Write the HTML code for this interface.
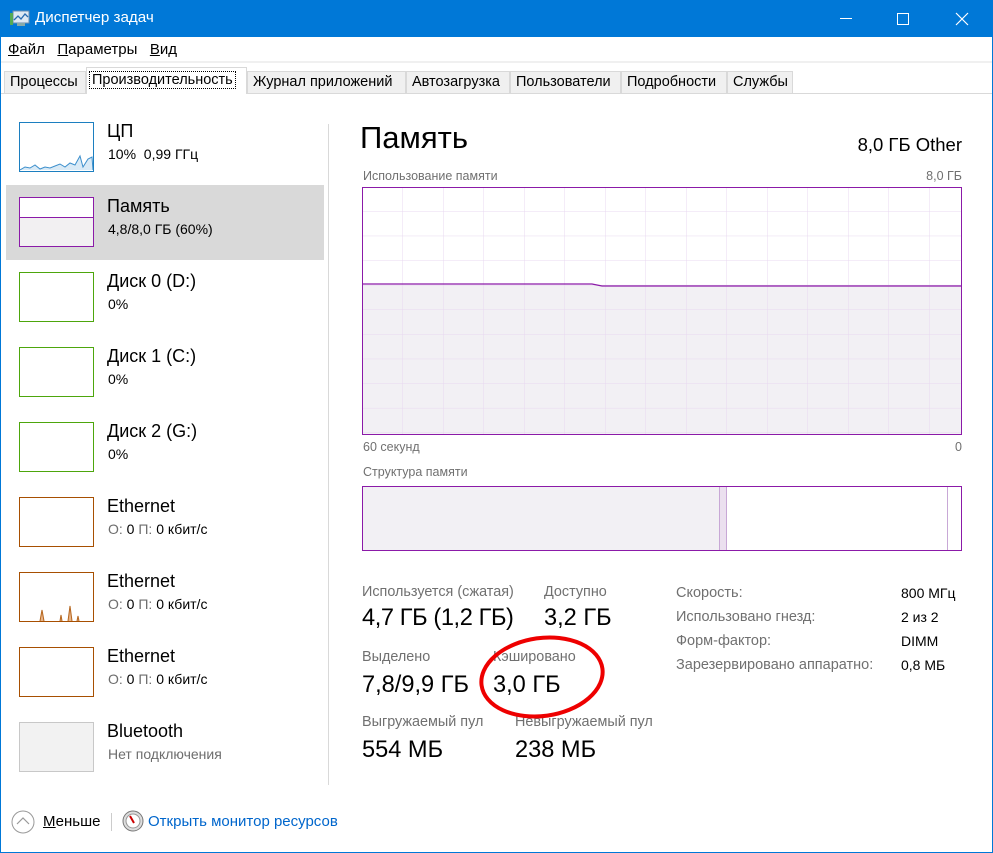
<!DOCTYPE html>
<html><head><meta charset="utf-8"><style>
*{margin:0;padding:0;box-sizing:border-box}
body{width:993px;height:853px;position:relative;background:#fff;font-family:"Segoe UI","Liberation Sans","DejaVu Sans",sans-serif;color:#000;overflow:hidden}
.a{position:absolute;white-space:nowrap}
.tab{position:absolute;top:71px;height:23px;background:#f0f0f0;border:1px solid #d9d9d9;font-size:14.5px;line-height:20px;padding-left:5px}
.th{position:absolute;left:19px;width:75px;height:50px;background:#fff}
.t1{position:absolute;left:107px;font-size:18px}
.t2{position:absolute;left:108px;font-size:14px}
.g{color:#6d6d6d}
.lbl{position:absolute;font-size:14.4px;color:#707070}
.val{position:absolute;font-size:23.6px}
.rl{position:absolute;left:676px;font-size:14.5px;color:#707070}
.rv{position:absolute;left:901px;font-size:14px}
</style></head><body>
<div class="a" style="left:0;top:0;width:993px;height:37px;background:#0078d7"></div>
<svg class="a" style="left:10px;top:10px" width="20" height="18"><rect x="3" y="1" width="16" height="12" fill="#dfe9f3" stroke="#6b8cae"/><polyline points="4,10 8,6 11,9 15,4 18,7" fill="none" stroke="#2b6cb0" stroke-width="1.3"/><rect x="0" y="3" width="3" height="12" fill="#5a5"/><rect x="7" y="13" width="8" height="3" fill="#8aa"/></svg>
<div class="a" style="left:35px;top:9px;font-size:15.2px;color:#fff">Диспетчер задач</div>
<div class="a" style="left:840px;top:18px;width:12px;height:1px;background:#fff"></div>
<div class="a" style="left:897px;top:13px;width:12px;height:12px;border:1px solid #fff"></div>
<svg class="a" style="left:955px;top:12px" width="14" height="14"><path d="M1 1L13 13M13 1L1 13" stroke="#fff" stroke-width="1.2"/></svg>
<div class="a" style="left:0;top:37px;width:1px;height:816px;background:#0078d7"></div>
<div class="a" style="left:992px;top:37px;width:1px;height:816px;background:#0078d7"></div>
<div class="a" style="left:0;top:852px;width:993px;height:1px;background:#0078d7"></div>
<div class="a" style="left:8px;top:41px;font-size:15px"><u>Ф</u>айл&nbsp;&nbsp;&nbsp;<u>П</u>араметры&nbsp;&nbsp;&nbsp;<u>В</u>ид</div>
<div class="a" style="left:1px;top:61px;width:991px;height:2px;background:#f0f0f0"></div>
<div class="a" style="left:1px;top:93px;width:991px;height:1px;background:#d9d9d9"></div>
<div class="tab" style="left:4px;width:82px">Процессы</div>
<div class="tab" style="left:86px;top:67px;height:27px;width:161px;background:#fff;border-bottom:none;line-height:24px;padding-left:2px"><span style="border:1px dotted #000;padding:0 2px">Производительность</span></div>
<div class="tab" style="left:247px;width:159px">Журнал приложений</div>
<div class="tab" style="left:406px;width:104px">Автозагрузка</div>
<div class="tab" style="left:510px;width:111px">Пользователи</div>
<div class="tab" style="left:621px;width:106px">Подробности</div>
<div class="tab" style="left:727px;width:66px">Службы</div>

<div class="a" style="left:6px;top:185px;width:318px;height:75px;background:#d9d9d9"></div>
<div class="a" style="left:328px;top:124px;width:1px;height:661px;background:#d9d9d9"></div>

<svg class="th" style="top:122px;border:1px solid #1c7fc0"><polyline points="0,47 5,44 10,45 15,42 20,46 25,44 30,45 35,43 40,41 45,44 50,40 55,42 60,33 63,44 68,36 72,34 73,47" fill="#d9eaf6" stroke="#3c8fcc" stroke-width="1"/></svg>
<div class="t1" style="top:121px">ЦП</div><div class="t2" style="top:146px">10%&nbsp; 0,99 ГГц</div>
<div class="th" style="top:197px;border:1px solid #8b1aa8;background:linear-gradient(#fff 0,#fff 19px,#8b1aa8 19px,#8b1aa8 20px,#f2f0f2 20px)"></div>
<div class="t1" style="top:196px">Память</div><div class="t2" style="top:221px">4,8/8,0 ГБ (60%)</div>
<div class="th" style="top:272px;border:1px solid #4da60c"></div>
<div class="t1" style="top:271px">Диск 0 (D:)</div><div class="t2" style="top:296px">0%</div>
<div class="th" style="top:347px;border:1px solid #4da60c"></div>
<div class="t1" style="top:346px">Диск 1 (C:)</div><div class="t2" style="top:371px">0%</div>
<div class="th" style="top:422px;border:1px solid #4da60c"></div>
<div class="t1" style="top:421px">Диск 2 (G:)</div><div class="t2" style="top:446px">0%</div>
<div class="th" style="top:497px;border:1px solid #a74f01"></div>
<div class="t1" style="top:496px">Ethernet</div><div class="t2" style="top:521px"><span class="g">О:</span> 0 <span class="g">П:</span> 0 кбит/с</div>
<svg class="th" style="top:572px;border:1px solid #a74f01"><path d="M20 48L22 37L24 48M40 48L41 42L42 48M48 48L50 33L52 48M57 48L58 43L59 48" fill="#e8b58a" stroke="#b5651d"/></svg>
<div class="t1" style="top:571px">Ethernet</div><div class="t2" style="top:596px"><span class="g">О:</span> 0 <span class="g">П:</span> 0 кбит/с</div>
<div class="th" style="top:647px;border:1px solid #a74f01"></div>
<div class="t1" style="top:646px">Ethernet</div><div class="t2" style="top:671px"><span class="g">О:</span> 0 <span class="g">П:</span> 0 кбит/с</div>
<div class="th" style="top:722px;border:1px solid #c8c8c8;background:#f2f2f2"></div>
<div class="t1" style="top:721px">Bluetooth</div><div class="t2 g" style="top:746px">Нет подключения</div>

<div class="a" style="left:360px;top:120px;font-size:31px">Память</div>
<div class="a" style="right:31px;top:134px;font-size:18.5px">8,0 ГБ Other</div>
<div class="lbl" style="left:363px;top:169px;font-size:12.5px">Использование памяти</div>
<div class="lbl" style="right:31px;top:169px;font-size:12.5px">8,0 ГБ</div>
<svg class="a" style="left:362px;top:187px" width="600" height="248">
<defs><pattern id="p" width="40.5" height="24.6" patternUnits="userSpaceOnUse" x="0.5" y="0"><path d="M40.5 0V24.6M0 24.6H40.5" fill="none" stroke="#e8d8f0" stroke-width="1"/></pattern></defs>
<rect x="0" y="98" width="600" height="150" fill="#f2f0f4"/>
<rect width="600" height="248" fill="url(#p)"/>
<polyline points="0,97 230,97 240,99 600,99" fill="none" stroke="#8b1aa8" stroke-width="1.2"/>
<rect x="0.5" y="0.5" width="599" height="247" fill="none" stroke="#8b1aa8"/>
</svg>
<div class="lbl" style="left:363px;top:440px;font-size:12.5px">60 секунд</div>
<div class="lbl" style="right:31px;top:440px;font-size:12.5px">0</div>
<div class="lbl" style="left:363px;top:465px;font-size:12.5px">Структура памяти</div>
<svg class="a" style="left:362px;top:486px" width="600" height="65">
<rect x="0" y="0" width="357" height="65" fill="#f2f0f4"/>
<rect x="357" y="0" width="7" height="65" fill="#ebe0ef"/>
<line x1="357.5" y1="0" x2="357.5" y2="65" stroke="#c8a8d6"/>
<line x1="364.5" y1="0" x2="364.5" y2="65" stroke="#c8a8d6"/>
<line x1="585.5" y1="0" x2="585.5" y2="65" stroke="#c8a8d6"/>
<rect x="0.5" y="0.5" width="599" height="64" fill="none" stroke="#8b1aa8"/>
</svg>

<div class="lbl" style="left:362px;top:584px">Используется (сжатая)</div>
<div class="val" style="left:362px;top:605px;letter-spacing:-0.4px">4,7 ГБ (1,2 ГБ)</div>
<div class="lbl" style="left:544px;top:584px">Доступно</div>
<div class="val" style="left:544px;top:605px">3,2 ГБ</div>
<div class="lbl" style="left:362px;top:649px">Выделено</div>
<div class="val" style="left:362px;top:672px">7,8/9,9 ГБ</div>
<div class="lbl" style="left:493px;top:649px">Кэшировано</div>
<div class="val" style="left:493px;top:672px">3,0 ГБ</div>
<div class="lbl" style="left:362px;top:714px">Выгружаемый пул</div>
<div class="val" style="left:362px;top:737px">554 МБ</div>
<div class="lbl" style="left:515px;top:714px">Невыгружаемый пул</div>
<div class="val" style="left:515px;top:737px">238 МБ</div>
<div class="rl" style="top:585px">Скорость:</div><div class="rv" style="top:585px">800 МГц</div>
<div class="rl" style="top:609px">Использовано гнезд:</div><div class="rv" style="top:609px">2 из 2</div>
<div class="rl" style="top:633px">Форм-фактор:</div><div class="rv" style="top:633px">DIMM</div>
<div class="rl" style="top:657px">Зарезервировано аппаратно:</div><div class="rv" style="top:657px">0,8 МБ</div>
<svg class="a" style="left:476px;top:634px" width="132" height="88"><ellipse cx="66" cy="43" rx="61" ry="39" fill="none" stroke="#e00" stroke-width="4" transform="rotate(-8 66 43)"/></svg>

<svg class="a" style="left:11px;top:810px" width="24" height="24"><circle cx="12" cy="12" r="11" fill="none" stroke="#999"/><path d="M6 14L12 8L18 14" fill="none" stroke="#999" stroke-width="1.2"/></svg>
<div class="a" style="left:43px;top:813px;font-size:15px"><u>М</u>еньше</div>
<div class="a" style="left:111px;top:813px;width:1px;height:18px;background:#ccc"></div>
<svg class="a" style="left:122px;top:810px" width="22" height="22"><circle cx="11" cy="11" r="10" fill="#ddd" stroke="#777"/><circle cx="11" cy="11" r="7" fill="#fff" stroke="#999"/><path d="M8 6L12 13" stroke="#c00" stroke-width="2"/></svg>
<div class="a" style="left:148px;top:813px;font-size:15px;color:#0066cc">Открыть монитор ресурсов</div>
</body></html>
